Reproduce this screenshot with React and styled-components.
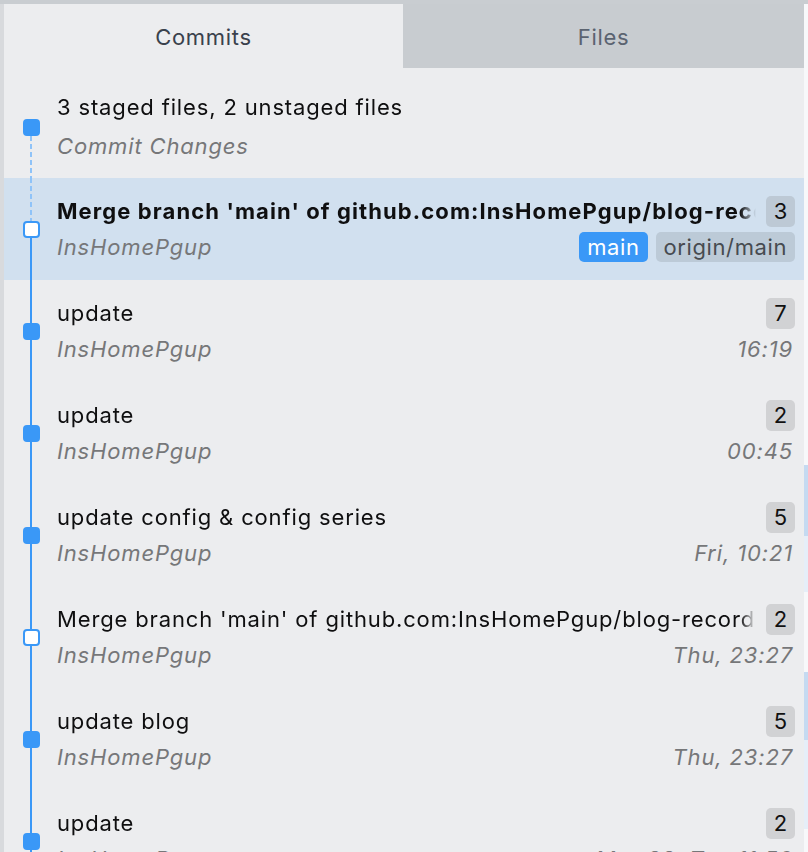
import React from 'react';
import styled, { createGlobalStyle } from 'styled-components';

const GlobalStyle = createGlobalStyle`
  html, body {
    margin: 0;
    padding: 0;
    background: #c9cdd1;
  }
  body {
    font-family: Inter, "Noto Sans", "Liberation Sans", sans-serif;
    -webkit-font-smoothing: antialiased;
  }
`;

const Frame = styled.div`
  width: 808px;
  height: 852px;
  overflow: hidden;
  display: flex;
  background: #c9cdd1;
  padding-top: 4px;
  box-sizing: border-box;
`;

const LeftEdge = styled.div`
  width: 4px;
  flex-shrink: 0;
  background: #d8dadd;
`;

const Panel = styled.div`
  width: 800px;
  display: flex;
  flex-direction: column;
  background: #ecedef;
`;

const SideStrip = styled.div`
  width: 4px;
  flex-shrink: 0;
  display: flex;
  flex-direction: column;
  background: #f7f8fa;
`;

const StripBlock = styled.div`
  height: ${p => p.h}px;
  background: ${p => p.c};
`;

const Tabs = styled.div`
  display: flex;
  height: 64px;
  flex-shrink: 0;
`;

const Tab = styled.div`
  width: ${p => p.w}px;
  display: flex;
  align-items: center;
  justify-content: center;
  font-size: 22px;
  letter-spacing: 0.7px;
  padding-top: 2px;
  box-sizing: border-box;
  background: ${p => (p.active ? '#ecedef' : '#c8ccd0')};
  color: ${p => (p.active ? '#3a414c' : '#5b6370')};
`;

const List = styled.div`
  padding-top: 8px;
  display: flex;
  flex-direction: column;
`;

const Row = styled.div`
  height: 102px;
  flex-shrink: 0;
  display: flex;
  background: ${p => (p.selected ? '#d1e0ef' : 'transparent')};
`;

const Graph = styled.div`
  width: 53px;
  flex-shrink: 0;
  display: flex;
  flex-direction: column;
  align-items: center;
`;

const Segment = styled.div`
  flex: 1;
  width: 2px;
  margin-left: 1px;
  background: ${p =>
    p.kind === 'solid'
      ? '#3a98f7'
      : p.kind === 'dashed'
      ? 'repeating-linear-gradient(to bottom, #8fc3f8 0 5px, transparent 5px 8px)'
      : 'transparent'};
`;

const Node = styled.div`
  width: 17px;
  height: 17px;
  margin-left: 1px;
  box-sizing: border-box;
  border-radius: 4px;
  flex-shrink: 0;
  background: ${p => (p.hollow ? '#ffffff' : '#3a98f7')};
  border: 2px solid #3a98f7;
`;

const Content = styled.div`
  flex: 1;
  min-width: 0;
  padding: ${p => p.top}px 9px 0 0;
  display: flex;
  flex-direction: column;
  gap: ${p => p.gap}px;
`;

const Line = styled.div`
  height: 36px;
  display: flex;
  align-items: center;
  gap: 10px;
`;

const Title = styled.div`
  flex: 1;
  min-width: 0;
  font-size: 22px;
  letter-spacing: ${p => (p.bold ? '1.1px' : '0.85px')};
  font-weight: ${p => (p.bold ? 700 : 400)};
  color: #0f0f10;
  white-space: nowrap;
  overflow: hidden;
  -webkit-mask-image: linear-gradient(to left, transparent 0, #000 16px);
  mask-image: linear-gradient(to left, transparent 0, #000 16px);
`;

const Sub = styled.div`
  flex: 1;
  min-width: 0;
  font-size: 22px;
  letter-spacing: 0.85px;
  font-style: italic;
  color: #767779;
  white-space: nowrap;
`;

const Time = styled.div`
  font-size: 22px;
  letter-spacing: 0.85px;
  font-style: italic;
  color: #767779;
  white-space: nowrap;
  padding-right: 2px;
`;

const Count = styled.div`
  height: 31px;
  min-width: 29px;
  padding: 0 6px;
  box-sizing: border-box;
  border-radius: 5px;
  display: flex;
  align-items: center;
  justify-content: center;
  font-size: 22px;
  color: #111;
  background: ${p => (p.selected ? '#bdc9d5' : '#d1d2d4')};
`;

const Tags = styled.div`
  display: flex;
  gap: 8px;
`;

const Tag = styled.div`
  height: 30px;
  padding: 0 8px;
  border-radius: 5px;
  display: flex;
  align-items: center;
  font-size: 22px;
  letter-spacing: 0.6px;
  color: ${p => (p.local ? '#ffffff' : '#474b50')};
  background: ${p => (p.local ? '#3a98f7' : '#bccad7')};
`;

const commits = [
  { title: "Merge branch 'main' of github.com:InsHomePgup/blog-records", count: 3, merge: true, selected: true, tags: true },
  { title: 'update', count: 7, time: '16:19' },
  { title: 'update', count: 2, time: '00:45' },
  { title: 'update config & config series', count: 5, time: 'Fri, 10:21' },
  { title: "Merge branch 'main' of github.com:InsHomePgup/blog-records", count: 2, time: 'Thu, 23:27', merge: true },
  { title: 'update blog', count: 5, time: 'Thu, 23:27' },
  { title: 'update', count: 2, time: 'Mar 22, Tue 11:50' },
];

const strip = [
  [463, '#f7f8fa'],
  [72, '#c5daf1'],
  [56, '#e6eef8'],
  [80, '#f7f8fa'],
  [68, '#c5daf1'],
  [90, '#e6eef8'],
  [23, '#f7f8fa'],
];

export default function App() {
  return (
    <>
      <GlobalStyle />
      <Frame>
        <LeftEdge />
        <Panel>
          <Tabs>
            <Tab w={399} active>Commits</Tab>
            <Tab w={401}>Files</Tab>
          </Tabs>
          <List>
            <Row>
              <Graph>
                <Segment kind="none" />
                <Node />
                <Segment kind="dashed" />
              </Graph>
              <Content top={13} gap={3}>
                <Line>
                  <Title>3 staged files, 2 unstaged files</Title>
                </Line>
                <Line>
                  <Sub>Commit Changes</Sub>
                </Line>
              </Content>
            </Row>
            {commits.map((c, i) => (
              <Row key={i} selected={c.selected}>
                <Graph>
                  <Segment kind={i === 0 ? 'dashed' : 'solid'} />
                  <Node hollow={c.merge} />
                  <Segment kind="solid" />
                </Graph>
                <Content top={15} gap={0}>
                  <Line>
                    <Title bold={c.selected}>{c.title}</Title>
                    <Count selected={c.selected}>{c.count}</Count>
                  </Line>
                  <Line>
                    <Sub>InsHomePgup</Sub>
                    {c.tags ? (
                      <Tags>
                        <Tag local>main</Tag>
                        <Tag>origin/main</Tag>
                      </Tags>
                    ) : (
                      <Time>{c.time}</Time>
                    )}
                  </Line>
                </Content>
              </Row>
            ))}
          </List>
        </Panel>
        <SideStrip>
          {strip.map(([h, c], i) => (
            <StripBlock key={i} h={h} c={c} />
          ))}
        </SideStrip>
      </Frame>
    </>
  );
}
